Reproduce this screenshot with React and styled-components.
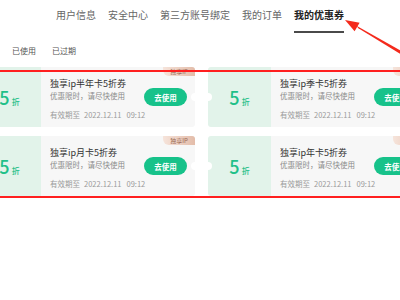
import React, { useState } from 'react'
import styled, { createGlobalStyle } from 'styled-components'

const GlobalStyle = createGlobalStyle`
  html, body {
    margin: 0;
    padding: 0;
    background: #fff;
  }
  body {
    font-family: "Noto Sans CJK SC", "Noto Sans", sans-serif;
  }
`

const tabs = ['用户信息', '安全中心', '第三方账号绑定', '我的订单', '我的优惠券']

const coupons = [
  { id: 1, title: '独享ip半年卡5折券' },
  { id: 2, title: '独享ip季卡5折券' },
  { id: 3, title: '独享ip月卡5折券' },
  { id: 4, title: '独享ip年卡5折券' },
]

export default function App() {
  const [current, setCurrent] = useState(4)
  return (
    <>
      <GlobalStyle />
      <Page>
        <Nav>
          {tabs.map((t, i) => (
            <Tab key={t} $active={current === i} onClick={() => setCurrent(i)}>
              {t}
            </Tab>
          ))}
        </Nav>
        <SubNav>
          <span>已使用</span>
          <span>已过期</span>
        </SubNav>
        <Grid>
          {coupons.map(c => (
            <Coupon key={c.id}>
              <Face>
                <Amount>5<small>折</small></Amount>
              </Face>
              <Body>
                <Info>
                  <Title>{c.title}</Title>
                  <Desc>优惠限时，请尽快使用</Desc>
                  <Expire>
                    有效期至<span>2022.12.11</span><span className="time">09:12</span>
                  </Expire>
                </Info>
                <UseButton>去使用</UseButton>
              </Body>
              <Badge>独享IP</Badge>
            </Coupon>
          ))}
        </Grid>

        {/* annotation overlay */}
        <RedBox />
        <Arrow viewBox="0 0 400 300">
          <polygon points="345,20 354.6,31.3 359.6,22.7" fill="#f42a1c" />
          <polygon points="356,25.6 358.4,28.2 402,55 402,51.5" fill="#f42a1c" />
        </Arrow>
      </Page>
    </>
  )
}

const Page = styled.div`
  position: relative;
  width: 400px;
  height: 300px;
  overflow: hidden;
`

const Nav = styled.nav`
  display: flex;
  justify-content: center;
  gap: 12px;
`

const Tab = styled.div`
  font-size: 10px;
  line-height: 14px;
  padding: 8px 0 9px;
  color: ${p => (p.$active ? '#222' : '#666')};
  font-weight: ${p => (p.$active ? 700 : 400)};
  border-bottom: 2px solid ${p => (p.$active ? '#4a4a4a' : 'transparent')};
  cursor: pointer;
`

const SubNav = styled.div`
  display: flex;
  gap: 16px;
  padding-left: 12px;
  margin-top: 12px;
  font-size: 8px;
  line-height: 12px;
  color: #555;
`

const Grid = styled.div`
  display: grid;
  grid-template-columns: repeat(2, 217px);
  column-gap: 13px;
  row-gap: 9px;
  margin: 10px 0 0 -22px;
`

const Coupon = styled.div`
  position: relative;
  display: flex;
  height: 60px;
  border-radius: 3px;
  &::before,
  &::after {
    content: '';
    position: absolute;
    top: 50%;
    width: 8px;
    height: 8px;
    margin-top: -4px;
    border-radius: 50%;
    background: #fff;
  }
  &::before {
    left: -4px;
  }
  &::after {
    right: -4px;
  }
`

const Face = styled.div`
  width: 63px;
  flex-shrink: 0;
  display: flex;
  align-items: center;
  justify-content: center;
  background: #e2f3ea;
  border-radius: 3px 0 0 3px;
`

const Amount = styled.div`
  color: #1fc089;
  font-size: 18px;
  font-weight: 500;
  line-height: 1;
  small {
    font-size: 8px;
    margin-left: 2px;
  }
`

const Body = styled.div`
  flex: 1;
  display: flex;
  align-items: center;
  padding: 0 8px 0 9px;
  background: #f7f7f7;
  border-radius: 0 3px 3px 0;
  min-width: 0;
`

const Info = styled.div`
  flex: 1;
  min-width: 0;
  display: flex;
  flex-direction: column;
  padding-top: 4px;
  white-space: nowrap;
`

const Title = styled.div`
  font-size: 9px;
  line-height: 12px;
  color: #333;
`

const Desc = styled.div`
  font-size: 7.5px;
  line-height: 11px;
  color: #8a8a8a;
`

const Expire = styled.div`
  margin-top: 8px;
  font-size: 7.5px;
  line-height: 11px;
  color: #9a9a9a;
  span {
    margin-left: 4px;
  }
  .time {
    margin-left: 5px;
  }
`

const UseButton = styled.button`
  flex-shrink: 0;
  width: 43px;
  height: 18px;
  padding: 0;
  border: none;
  border-radius: 9px;
  background: #17c28a;
  color: #fff;
  font-family: inherit;
  font-size: 7.5px;
  font-weight: 700;
  cursor: pointer;
`

const Badge = styled.div`
  position: absolute;
  top: 0;
  right: 0;
  width: 32px;
  height: 9px;
  border-radius: 0 3px 0 6px;
  background: linear-gradient(90deg, #f6e4db, #e3bca9);
  color: #9b6a55;
  font-size: 6px;
  line-height: 9px;
  text-align: center;
`

const RedBox = styled.div`
  position: absolute;
  top: 70px;
  left: -10px;
  right: -10px;
  height: 124px;
  border: 2px solid #ff1f1f;
  pointer-events: none;
`

const Arrow = styled.svg`
  position: absolute;
  top: 0;
  left: 0;
  width: 400px;
  height: 300px;
  pointer-events: none;
`
